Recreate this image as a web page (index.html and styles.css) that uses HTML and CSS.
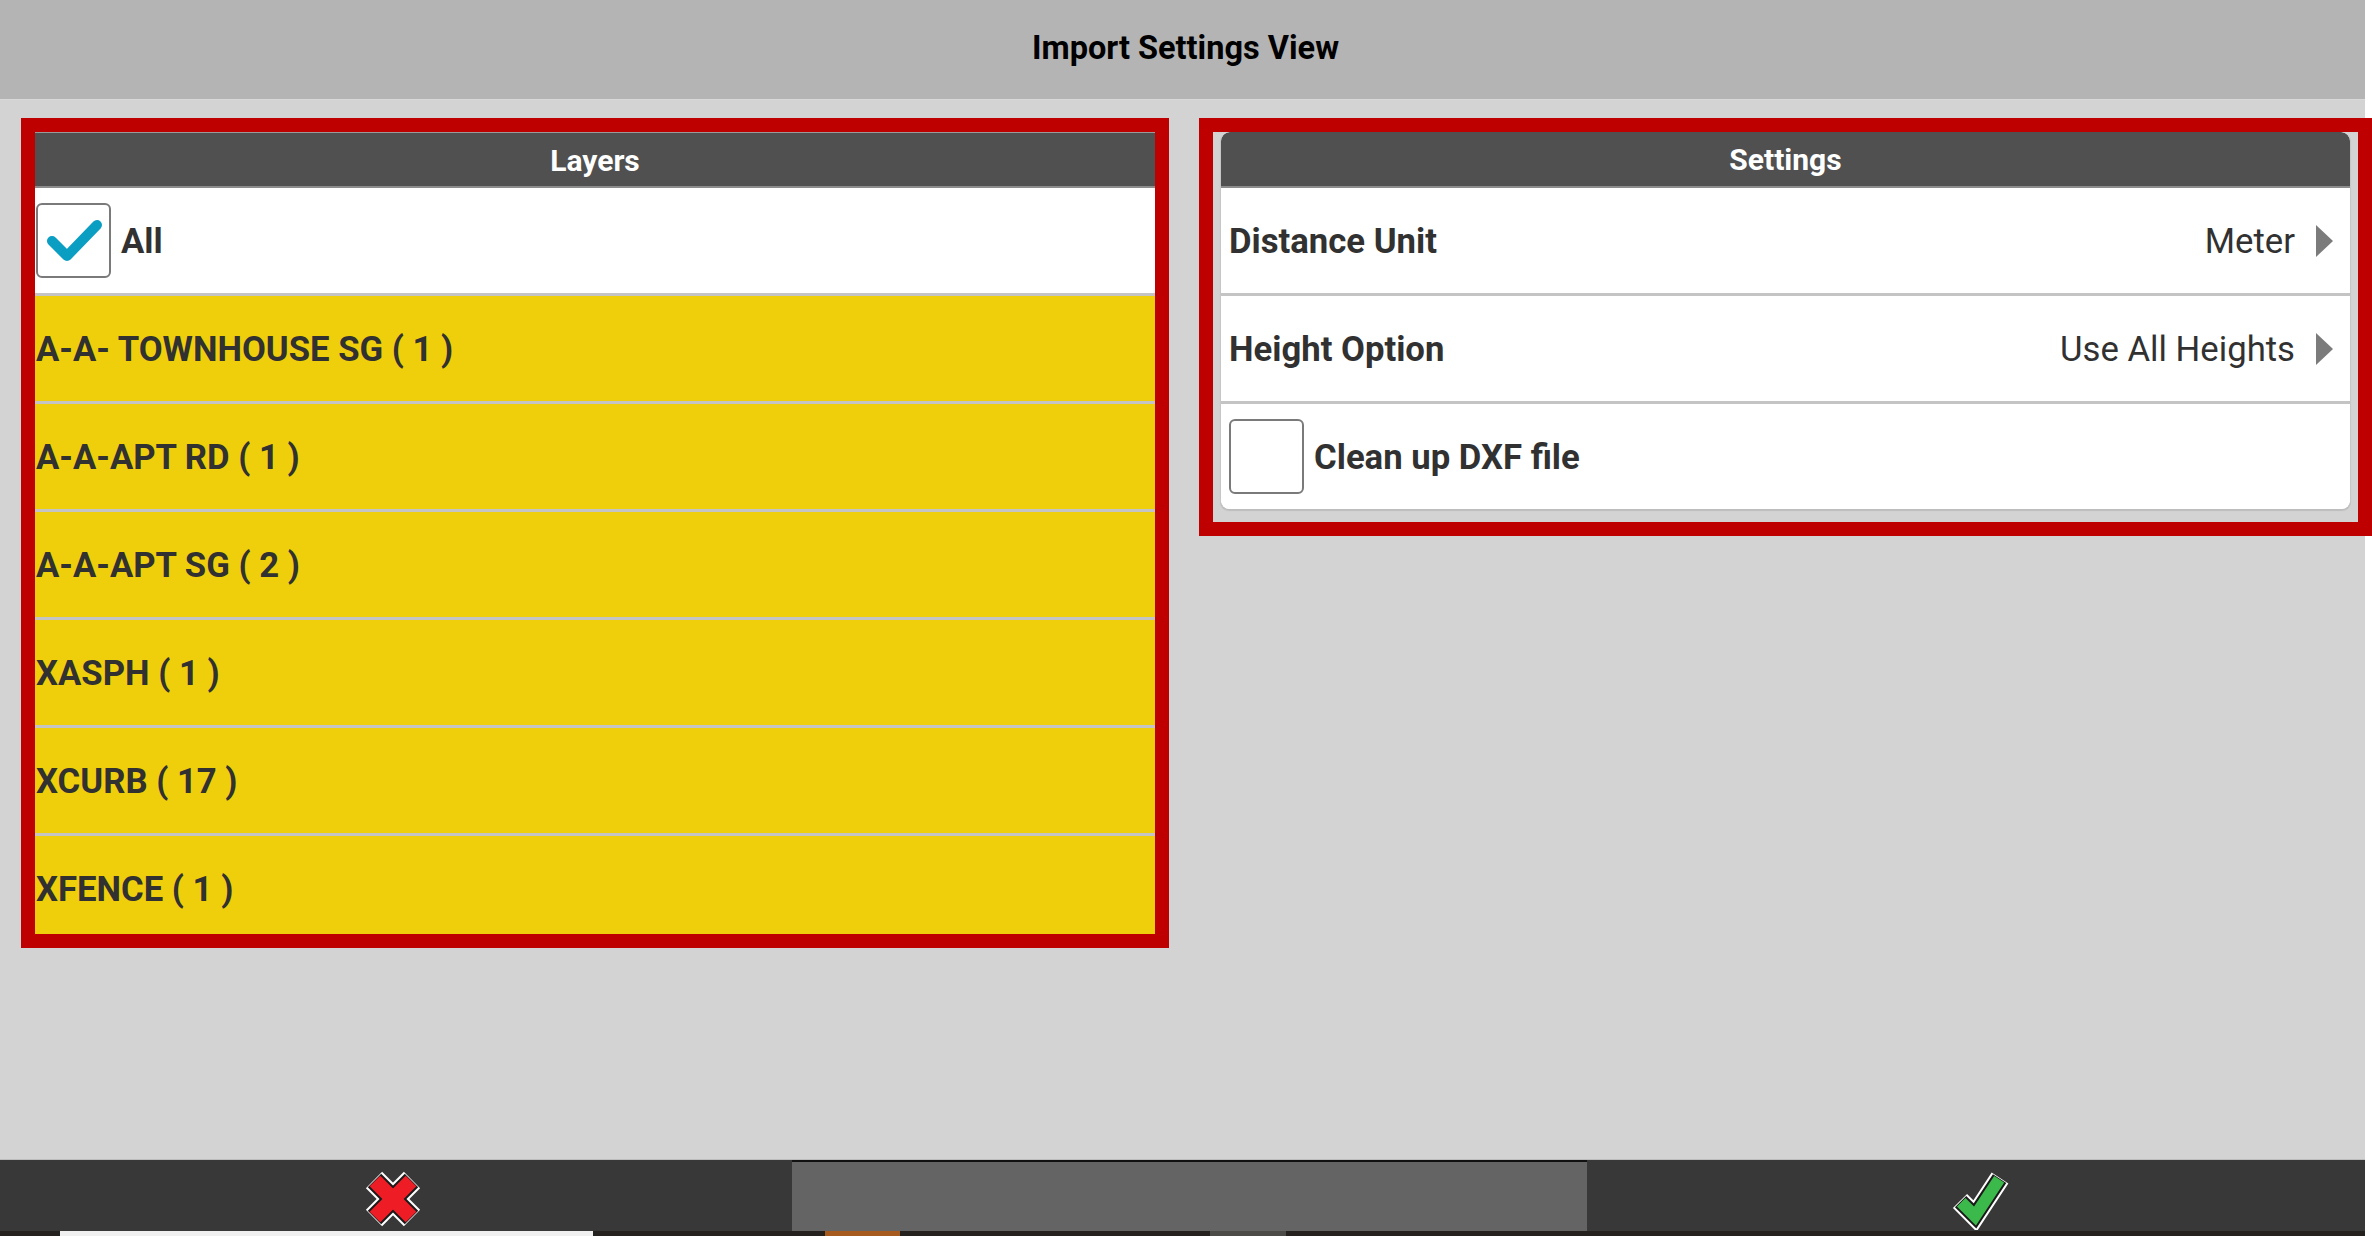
FILE: index.html
```html
<!DOCTYPE html>
<html lang="en">
<head>
    <meta charset="UTF-8">
    <title>Import Settings View</title>
    <link rel="stylesheet" href="styles.css">
</head>
<body>

<div class="app">
    <!-- Barra de titulo -->
    <div class="topbar">Import Settings View</div>

    <div class="main">
        <!-- Capas -->
        <div class="frame frame-layers">
            <div class="panel layers">
                <div class="panel-header">Layers</div>
                <div class="row row-all">
                    <div class="checkbox">
                        <svg width="75" height="75" viewBox="0 0 75 75">
                            <polyline points="16,38 31,53 61,22" fill="none" stroke="#0a9ec2" stroke-width="10" stroke-linecap="round" stroke-linejoin="round"/>
                        </svg>
                    </div>
                    <span class="label">All</span>
                </div>
                <div class="row layer"><span class="label">A-A- TOWNHOUSE SG ( 1 )</span></div>
                <div class="row layer"><span class="label">A-A-APT RD ( 1 )</span></div>
                <div class="row layer"><span class="label">A-A-APT SG ( 2 )</span></div>
                <div class="row layer"><span class="label">XASPH ( 1 )</span></div>
                <div class="row layer"><span class="label">XCURB ( 17 )</span></div>
                <div class="row layer"><span class="label">XFENCE ( 1 )</span></div>
            </div>
        </div>

        <!-- Ajustes -->
        <div class="frame frame-settings">
            <div class="panel settings">
                <div class="panel-header">Settings</div>
                <div class="row setting">
                    <span class="label">Distance Unit</span>
                    <span class="value">Meter</span>
                    <span class="arrow"></span>
                </div>
                <div class="row setting">
                    <span class="label">Height Option</span>
                    <span class="value">Use All Heights</span>
                    <span class="arrow"></span>
                </div>
                <div class="row setting setting-check">
                    <div class="checkbox"></div>
                    <span class="label">Clean up DXF file</span>
                </div>
            </div>
        </div>
    </div>

    <!-- Botones de abajo -->
    <div class="bottombar">
        <div class="bottom-btn bottom-cancel">
            <svg width="62" height="58" viewBox="0 0 62 58">
                <g fill="none" stroke-linecap="butt">
                    <g stroke="#ffffff" stroke-width="23">
                        <line x1="12" y1="10" x2="50" y2="48"/>
                        <line x1="50" y1="10" x2="12" y2="48"/>
                    </g>
                    <g stroke="#1a1a1a" stroke-width="19">
                        <line x1="12.5" y1="10.5" x2="49.5" y2="47.5"/>
                        <line x1="49.5" y1="10.5" x2="12.5" y2="47.5"/>
                    </g>
                    <g stroke="#ee1d25" stroke-width="15">
                        <line x1="13" y1="11" x2="49" y2="47"/>
                        <line x1="49" y1="11" x2="13" y2="47"/>
                    </g>
                </g>
            </svg>
        </div>
        <div class="bottom-btn bottom-mid"></div>
        <div class="bottom-btn bottom-ok">
            <svg width="64" height="62" viewBox="0 0 64 62">
                <g fill="none" stroke-linejoin="miter" stroke-miterlimit="6">
                    <polyline points="10,33 25,48 50,10" stroke="#ffffff" stroke-width="20"/>
                    <polyline points="10.6,33.6 25,48 49.6,10.6" stroke="#1a1a1a" stroke-width="16"/>
                    <polyline points="11.2,34.2 25,48 49.2,11.2" stroke="#3cb94b" stroke-width="12"/>
                </g>
            </svg>
        </div>
    </div>

    <div class="strip">
        <span class="strip-white"></span>
        <span class="strip-orange"></span>
        <span class="strip-grey"></span>
    </div>
</div>

</body>
</html>
```

FILE: styles.css
```css
body {
    margin: 0;
    padding: 0;
    background-color: #ffffff;
    font-family: Roboto, "Liberation Sans", sans-serif;
    overflow: hidden;
}

/* Contenedor principal */
.app {
    width: 2365px;
    height: 1236px;
    display: flex;
    flex-direction: column;
    background-color: #d3d3d3;
}

.topbar {
    height: 99px;
    line-height: 97px;
    background-color: #b4b4b4;
    text-align: center;
    font-size: 32.5px;
    font-weight: bold;
    color: #000000;
    padding-left: 6px;
}

.main {
    flex: 1;
    display: flex;
    align-items: flex-start;
    gap: 30px;
    padding: 18px 0 0 21px;
    border-top: 1px solid #d9d9d9;
}

/* Marcos rojos */
.frame {
    border: 14px solid #bf0000;
    flex-shrink: 0;
}

.frame-layers {
    width: 1120px;
    height: 802px;
}

.frame-settings {
    width: 1145px;
    height: 390px;
}

.panel {
    overflow: hidden;
}

.layers {
    height: 802px;
}

.settings {
    margin: 0 7px;
    height: 377px;
    border-radius: 9px;
    background-color: #ffffff;
    border-left: 1px solid #c6c6c6;
    border-right: 1px solid #c6c6c6;
    box-shadow: 0 2px 1px #bdbdbd;
}

.panel-header {
    height: 53px;
    line-height: 55px;
    background-color: #505050;
    border-top: 1px solid #9a9a9a;
    border-bottom: 2px solid #8c8c8c;
    color: #ffffff;
    text-align: center;
    font-size: 30px;
    font-weight: bold;
}

.settings .panel-header {
    border-top: none;
    height: 54px;
    border-radius: 9px 9px 0 0;
}

/* Filas */
.row {
    height: 105px;
    display: flex;
    align-items: center;
    border-bottom: 3px solid #c4c4c4;
    font-size: 34.7px;
    color: #313131;
}

.row:last-child {
    border-bottom: none;
}

.label {
    font-weight: bold;
    padding-top: 1px;
}

.row-all {
    background-color: #ffffff;
    padding-left: 1px;
    gap: 10px;
}

.layer {
    background-color: #efcf0b;
    padding-left: 1px;
}

.setting {
    background-color: #ffffff;
    padding: 0 17px 0 8px;
}

.setting .value {
    margin-left: auto;
    margin-right: 21px;
    padding-top: 1px;
}

.setting-check {
    gap: 10px;
    border-bottom: none;
}

.checkbox {
    width: 71px;
    height: 71px;
    border: 2px solid #7a7a7a;
    border-radius: 6px;
    background-color: #ffffff;
    flex-shrink: 0;
}

.checkbox svg {
    display: block;
    margin: -2px;
}

.arrow {
    width: 0;
    height: 0;
    border-top: 16px solid transparent;
    border-bottom: 16px solid transparent;
    border-left: 17px solid #7b7b7b;
}

/* Barra de abajo */
.bottombar {
    height: 71px;
    display: flex;
    background-color: #383838;
    border-top: 1px solid #bcbcbc;
}

.bottom-btn {
    display: flex;
    align-items: center;
    justify-content: center;
}

.bottom-btn svg {
    margin-top: 6px;
}

.bottom-cancel {
    flex: 0 0 792px;
    box-sizing: border-box;
    padding-right: 6px;
}

.bottom-mid {
    flex: 0 0 795px;
    background-color: #646464;
    border-top: 2px solid #111111;
}

.bottom-ok {
    flex: 1;
    padding-left: 12px;
}

.strip {
    height: 5px;
    display: flex;
    background-color: #24211f;
}

.strip-white {
    width: 533px;
    margin-left: 60px;
    background-color: #f0f0f0;
}

.strip-orange {
    width: 75px;
    margin-left: 232px;
    background-color: #a65a1e;
}

.strip-grey {
    width: 76px;
    margin-left: 310px;
    background-color: #4c4b48;
}
```
